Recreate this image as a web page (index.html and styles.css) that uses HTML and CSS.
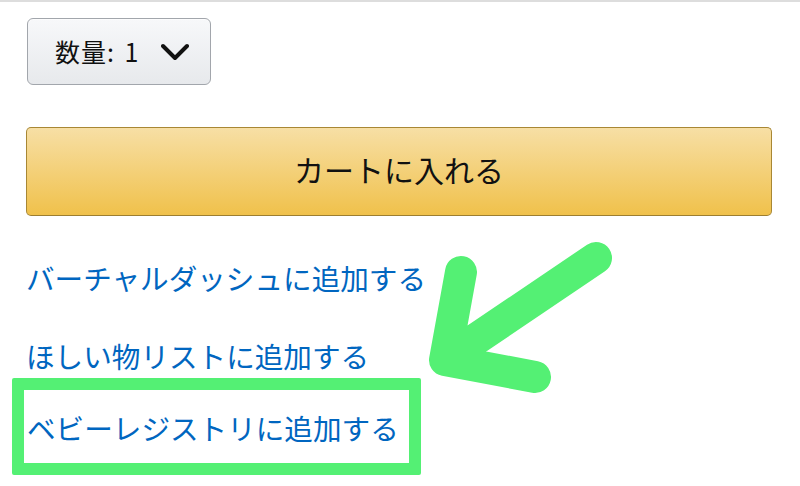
FILE: index.html
```html
<!DOCTYPE html>
<html lang="ja">
<head>
    <meta charset="UTF-8">
    <meta name="viewport" content="width=device-width, initial-scale=1.0">
    <title>カートに入れる</title>
    <link rel="stylesheet" href="styles.css">
</head>
<body>

    <div class="buy-box">
        <!-- Quantity -->
        <button type="button" class="qty-btn">
            <span class="qty-label">数量: 1</span>
            <svg class="chevron" width="28" height="18" viewBox="0 0 28 18">
                <polyline points="2,3 14,15 26,3" fill="none" stroke="#111" stroke-width="4" stroke-linecap="round" stroke-linejoin="round"/>
            </svg>
        </button>

        <!-- Add to cart -->
        <button type="button" class="cart-btn">カートに入れる</button>

        <!-- Add to lists -->
        <div class="links">
            <a href="#" class="list-link">バーチャルダッシュに追加する</a>
            <a href="#" class="list-link">ほしい物リストに追加する</a>
            <div class="highlight">
                <a href="#" class="list-link">ベビーレジストリに追加する</a>
            </div>
        </div>
    </div>

    <!-- Annotation arrow -->
    <svg class="arrow" width="800" height="486" viewBox="0 0 800 486">
        <path d="M596,256 L445,358 M461,270 L445,358 L535,375" fill="none" stroke="#54f074" stroke-width="32" stroke-linecap="round" stroke-linejoin="round"/>
    </svg>

</body>
</html>
```

FILE: styles.css
```css
/* General Reset */
* {
    margin: 0;
    padding: 0;
    box-sizing: border-box;
}

body {
    font-family: "Noto Sans CJK JP", "Noto Sans", sans-serif;
    background-color: #fff;
    border-top: 2px solid #dddddd;
    width: 800px;
    height: 486px;
    overflow: hidden;
    position: relative;
}

.buy-box {
    padding: 16px 28px 0 26px;
}

/* Quantity Button */
.qty-btn {
    display: flex;
    align-items: center;
    width: 184px;
    height: 67px;
    margin-left: 1px;
    padding: 0 0 0 27px;
    border: 1px solid #a2a6ac;
    border-radius: 6px;
    background: linear-gradient(#f7f8fa, #e7e9ec);
    box-shadow: 0 1px 0 rgba(255, 255, 255, 0.6) inset;
    font-family: inherit;
    color: #111;
    cursor: pointer;
}

.qty-label {
    font-size: 25px;
    line-height: 1;
    letter-spacing: 1px;
    word-spacing: 3px;
}

.chevron {
    margin-left: 22px;
}

/* Add to Cart Button */
.cart-btn {
    display: block;
    width: 746px;
    height: 89px;
    margin-top: 42px;
    padding-bottom: 5px;
    border: 1px solid #a88734;
    border-bottom-color: #9c7e31;
    border-radius: 5px;
    background: linear-gradient(#f7dfa5, #f0c14b);
    font-family: inherit;
    font-size: 30px;
    color: #111;
    cursor: pointer;
}

/* Links */
.links {
    display: flex;
    flex-direction: column;
    margin-top: 44px;
}

.list-link {
    display: block;
    font-size: 28.6px;
    line-height: 36px;
    color: #0066c0;
    text-decoration: none;
    white-space: nowrap;
}

.list-link + .list-link {
    margin-top: 42px;
}

/* Annotation box */
.highlight {
    width: 409px;
    margin: 4px 0 0 -14px;
    padding: 20px 0 17px 3px;
    border: 12px solid #54f074;
    border-radius: 2px;
}

.arrow {
    position: absolute;
    top: 0;
    left: 0;
    pointer-events: none;
}
```
